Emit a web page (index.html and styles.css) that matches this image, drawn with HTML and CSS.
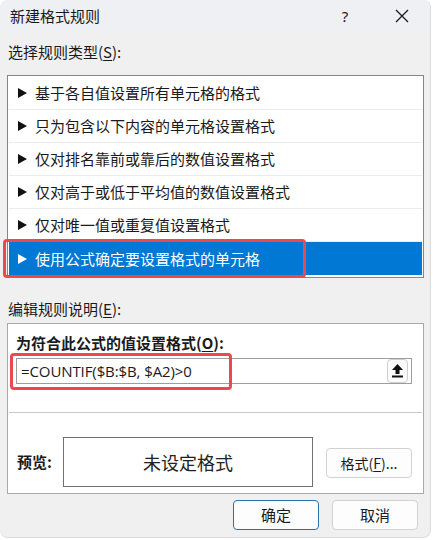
FILE: index.html
```html
<!DOCTYPE html>
<html lang="zh-CN">
<head>
<meta charset="utf-8">
<title>新建格式规则</title>
<link rel="stylesheet" href="styles.css">
</head>
<body>
<div class="window">
  <div class="titlebar">
    <span class="title">新建格式规则</span>
    <span class="tb-btn help">?</span>
    <span class="tb-btn close">
      <svg width="14" height="14" viewBox="0 0 14 14"><path d="M1 1L13 13M13 1L1 13" stroke="#1a1a1a" stroke-width="1.3" fill="none"/></svg>
    </span>
  </div>
  <div class="content">
    <div class="label first">选择规则类型(<u>S</u>):</div>
    <div class="list">
      <div class="row"><span class="tri"></span>基于各自值设置所有单元格的格式</div>
      <div class="row"><span class="tri"></span>只为包含以下内容的单元格设置格式</div>
      <div class="row"><span class="tri"></span>仅对排名靠前或靠后的数值设置格式</div>
      <div class="row"><span class="tri"></span>仅对高于或低于平均值的数值设置格式</div>
      <div class="row"><span class="tri"></span>仅对唯一值或重复值设置格式</div>
      <div class="row selected"><span class="tri"></span>使用公式确定要设置格式的单元格<span class="mark mark-row"></span></div>
    </div>
    <div class="label second">编辑规则说明(<u>E</u>):</div>
    <div class="group">
      <div class="group-top">
        <div class="label bold">为符合此公式的值设置格式(<u>O</u>):</div>
        <div class="formula">
          <span class="formula-text">=COUNTIF($B:$B, $A2)&gt;0</span>
          <span class="pick">
            <svg width="11" height="14" viewBox="0 0 11 14"><path d="M5.5 0L11 6H7.5V10H3.5V6H0Z" fill="#111"/><rect x="0" y="11.5" width="11" height="2" fill="#111"/></svg>
          </span>
          <span class="mark mark-formula"></span>
        </div>
      </div>
      <div class="group-sep"></div>
      <div class="preview-row">
        <span class="preview-label">预览:</span>
        <div class="preview-box">未设定格式</div>
        <button class="btn fmt">格式(<u>F</u>)...</button>
      </div>
    </div>
    <div class="actions">
      <button class="btn ok">确定</button>
      <button class="btn">取消</button>
    </div>
  </div>
</div>
</body>
</html>
```

FILE: styles.css
```css
* { box-sizing: border-box; }
html, body {
  margin: 0;
  padding: 0;
  background: #ffffff;
}
body {
  font-family: "Noto Sans CJK SC", "Noto Sans", sans-serif;
  color: #1a1a1a;
}
.window {
  width: 431px;
  height: 538px;
  background: #f0f0f0;
  border-radius: 8px;
  overflow: hidden;
  border-right: 1px solid #dcdcdc;
  border-bottom: 1px solid #dcdcdc;
}
.titlebar {
  height: 32px;
  background: #eef0f4;
  display: flex;
  align-items: center;
  padding-left: 10px;
  padding-right: 5px;
}
.title {
  font-size: 15px;
  line-height: 20px;
  flex: 1;
}
.tb-btn {
  width: 46px;
  height: 32px;
  display: flex;
  align-items: center;
  justify-content: center;
}
.help {
  font-family: "Noto Sans", sans-serif;
  font-size: 15px;
  margin-right: 11px;
}
.content {
  padding: 0 6px 0 7px;
}
.label {
  font-size: 15px;
  line-height: 20px;
  padding-left: 1px;
}
.label u, .btn u { text-underline-offset: 2px; }
.label.first { margin-top: 10px; margin-bottom: 13px; }
.label.second { margin-top: 21px; margin-bottom: 4px; }
.label.bold { font-weight: 700; padding-left: 0; }
.list {
  height: 203px;
  background: #ffffff;
  border: 1px solid #858585;
  padding: 1px;
}
.row {
  position: relative;
  height: 33px;
  display: flex;
  align-items: center;
  padding-left: 9px;
  font-size: 15px;
  line-height: 20px;
  border-bottom: 1px solid #ececec;
}
.tri {
  width: 0;
  height: 0;
  border-top: 5px solid transparent;
  border-bottom: 5px solid transparent;
  border-left: 9px solid #111;
  margin-right: 8px;
}
.row.selected {
  background: #0078d4;
  color: #ffffff;
  border-bottom: none;
}
.row.selected .tri { border-left-color: #ffffff; }
.mark {
  position: absolute;
  border: 3px solid #e9494f;
  border-radius: 4px;
  pointer-events: none;
}
.mark-row {
  left: -6px;
  top: -3px;
  width: 303px;
  height: 39px;
}
.group {
  height: 171px;
  border: 1px solid #a9a9a9;
  background: #ffffff;
}
.group-top {
  padding: 9px 11px 28px 8px;
}
.formula {
  position: relative;
  margin-top: 5px;
  height: 26px;
  border: 1px solid #9d9d9d;
  background: #ffffff;
  display: flex;
  align-items: center;
  padding-left: 4px;
}
.formula-text {
  flex: 1;
  font-family: "Open Sans", "Noto Sans", sans-serif;
  font-size: 15px;
  line-height: 20px;
  letter-spacing: -0.1px;
}
.pick {
  width: 21px;
  height: 24px;
  margin-right: 3px;
  border: 1px solid #cfcfcf;
  border-radius: 4px;
  background: #fbfbfb;
  display: flex;
  align-items: center;
  justify-content: center;
}
.mark-formula {
  left: -7px;
  top: -6px;
  width: 222px;
  height: 37px;
}
.group-sep {
  margin: 0 1px;
  border-top: 1px solid #c8c8c8;
}
.preview-row {
  display: flex;
  align-items: center;
  padding: 24px 0 0 9px;
}
.preview-label {
  width: 46px;
  font-size: 15px;
  font-weight: 700;
  line-height: 20px;
}
.preview-box {
  width: 250px;
  height: 50px;
  border: 1px solid #707070;
  background: #ffffff;
  display: flex;
  align-items: center;
  justify-content: center;
  font-size: 18px;
  line-height: 24px;
  color: #222;
}
.btn {
  width: 86px;
  height: 30px;
  border: 1px solid #d2d2d2;
  border-radius: 4px;
  background: #fdfdfd;
  font-family: "Noto Sans CJK SC", "Noto Sans", sans-serif;
  font-size: 15px;
  line-height: 20px;
  color: #1a1a1a;
  padding: 0;
}
.fmt {
  margin-left: 13px;
  margin-top: 2px;
  font-size: 14px;
}
.actions {
  display: flex;
  justify-content: flex-end;
  gap: 13px;
  margin-top: 6px;
  padding-right: 6px;
}
.btn.ok {
  border: 1px solid #2f6fa7;
}
```
